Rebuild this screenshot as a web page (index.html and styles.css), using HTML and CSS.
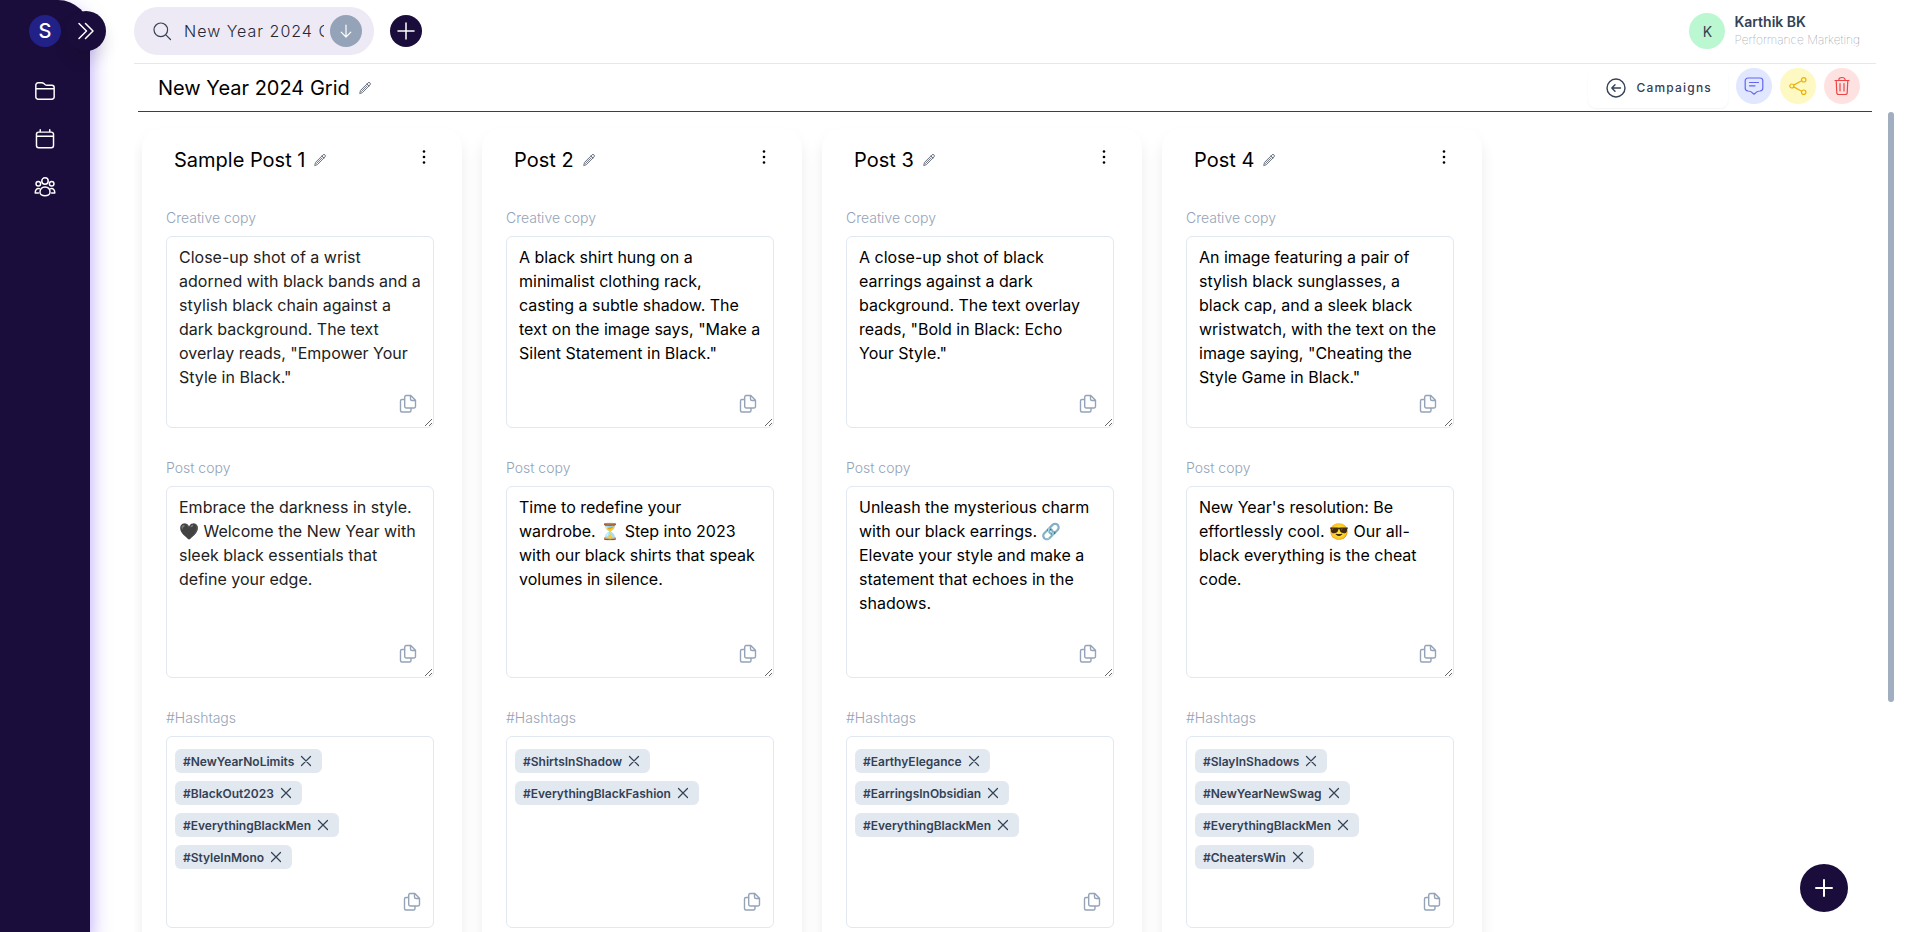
FILE: index.html
```html
<!DOCTYPE html>
<html lang="en">
<head>
<meta charset="utf-8">
<title>New Year 2024 Grid</title>
<link rel="stylesheet" href="styles.css">
</head>
<body>
<svg class="sprite" aria-hidden="true">
  <symbol id="pencil" viewBox="0 0 14 14"><path d="M1.8 12.2 2.5 9.4 10 1.9a1.3 1.3 0 0 1 2 2L4.600 11.400ZM9 3l2 2M3.500 10.400l5.500-5.500"/></symbol>
  <symbol id="copy" viewBox="0 0 20 20"><path d="M8.200 1.500h4.600l4.700 4.700v6.300a1.500 1.500 0 0 1-1.500 1.500H8.200a1.500 1.500 0 0 1-1.500-1.500V3a1.500 1.500 0 0 1 1.500-1.500ZM12.500 1.800v3.200a1.500 1.500 0 0 0 1.500 1.500h3.200M6.500 5.500H4A1.500 1.500 0 0 0 2.500 7v9.500A1.500 1.500 0 0 0 4 18h7.500a1.500 1.500 0 0 0 1.500-1.500v-2.300"/></symbol>
  <symbol id="close" viewBox="0 0 16 16"><path d="m3.500 3.500 9 9m0-9-9 9"/></symbol>
  <symbol id="dots" viewBox="0 0 16 16"><circle cx="8" cy="2.500" r="1.300"/><circle cx="8" cy="8" r="1.300"/><circle cx="8" cy="13.500" r="1.300"/></symbol>
  <symbol id="plus" viewBox="0 0 20 20"><path d="M10 2v16M2 10h16"/></symbol>
</svg>
<div class="app">
  <aside class="sidebar">
    <div class="brand">S</div>
    <button class="expand" aria-label="Expand menu"><svg viewBox="0 0 20 20"><path d="m3 2.500 7.500 7.500L3 17.500M9.500 2.500 17 10l-7.500 7.500"/></svg></button>
    <nav class="side-nav" aria-label="Main">
      <a href="#folders" aria-label="Folders"><svg viewBox="0 0 24 24"><path d="M2 18.500V5.500A2.500 2.500 0 0 1 4.500 3h4.200c.8 0 1.400.3 2 .8l1.600 1.400c.5.400 1.100.6 1.700.6h5.500A2.500 2.500 0 0 1 22 8.300v10.200a2.500 2.500 0 0 1-2.500 2.500h-15A2.500 2.500 0 0 1 2 18.500ZM2 9.500h20"/></svg></a>
      <a href="#calendar" aria-label="Calendar"><svg viewBox="0 0 24 24"><path d="M5 4.500h14a2.300 2.300 0 0 1 2.300 2.300v12.400a2.300 2.300 0 0 1-2.300 2.300H5a2.300 2.300 0 0 1-2.300-2.300V6.800A2.300 2.300 0 0 1 5 4.500ZM2.700 9h18.600M6.800 2v2.500M17.200 2v2.500"/></svg></a>
      <a href="#team" aria-label="Team"><svg viewBox="0 0 24 24"><circle cx="12" cy="5.500" r="3.500"/><circle cx="4.700" cy="8.500" r="2.500"/><circle cx="19.300" cy="8.500" r="2.500"/><path d="M12 12c3.600 0 5.500 2.300 5.500 5.800 0 2.200-2.500 3.700-5.500 3.700s-5.500-1.500-5.500-3.700C6.500 14.300 8.400 12 12 12ZM5.800 13.800c-2.900-.5-4.500 1.200-4.500 4.700h3.500M18.200 13.800c2.900-.5 4.500 1.200 4.500 4.700h-3.500"/></svg></a>
    </nav>
  </aside>
  <main class="main">
    <header class="topbar">
      <form class="search">
        <svg class="search-icon" viewBox="0 0 20 20"><circle cx="8.800" cy="8.800" r="6.800"/><path d="m13.800 13.800 4.700 4.700"/></svg>
        <input type="text" aria-label="Search" value="New Year 2024 Grid">
        <button type="button" aria-label="Next"><svg viewBox="0 0 20 20"><path d="M10 2.500v15M4 11.500l6 6 6-6"/></svg></button>
      </form>
      <button class="round add" aria-label="Add"><svg><use href="#plus"/></svg></button>
      <div class="user">
        <div class="avatar">K</div>
        <div class="who"><strong>Karthik BK</strong><span>Performance Marketing</span></div>
      </div>
    </header>
    <div class="titlebar">
      <h1>New Year 2024 Grid</h1>
      <button class="edit" aria-label="Edit title"><svg><use href="#pencil"/></svg></button>
      <div class="actions">
        <button class="back"><svg viewBox="0 0 20 20"><circle cx="10" cy="10" r="9"/><path d="M14.500 10h-8.500M9 6.800 5.800 10 9 13.200"/></svg>Campaigns</button>
        <button class="action comment" aria-label="Comments"><svg viewBox="0 0 20 20"><path d="M4 2h12a2.800 2.800 0 0 1 2.800 2.800v7.400c0 1.600-1.100 2.600-2.800 2.800-1.400.1-2.600.2-3.200.9L10 18.200l-2.800-2.300c-.6-.7-1.800-.8-3.200-.9-1.700-.2-2.800-1.200-2.800-2.800V4.800A2.800 2.800 0 0 1 4 2ZM5.500 6.500h9M5.500 9.800h5.500"/></svg></button>
        <button class="action share" aria-label="Share"><svg viewBox="0 0 20 20"><circle cx="3.800" cy="10" r="2"/><circle cx="15.700" cy="3.800" r="2.200"/><circle cx="15.700" cy="16.200" r="2.200"/><path d="m5.600 9.100 8.100-4.300M5.600 10.900l8.100 4.300"/></svg></button>
        <button class="action delete" aria-label="Delete"><svg viewBox="0 0 20 20"><path d="M3 4.500h14M6.800 4.500c0-2 .8-3 3.200-3s3.200 1 3.200 3M4.200 4.500l.6 12.200a1.800 1.800 0 0 0 1.800 1.800h6.800a1.800 1.800 0 0 0 1.800-1.800l.6-12.200M8 7.500v7.500M12 7.500v7.500"/></svg></button>
      </div>
    </div>
    <div class="board">
      <article class="card">
        <header><h2>Sample Post 1</h2><button class="edit" aria-label="Edit"><svg><use href="#pencil"/></svg></button><button class="more" aria-label="More"><svg><use href="#dots"/></svg></button></header>
        <div class="field"><label for="c1">Creative copy</label><div class="box"><textarea id="c1" class="soft">Close-up shot of a wrist adorned with black bands and a stylish black chain against a dark background. The text overlay reads, "Empower Your Style in Black."</textarea><button class="copy" aria-label="Copy"><svg><use href="#copy"/></svg></button></div></div>
        <div class="field"><label for="p1">Post copy</label><div class="box"><textarea id="p1" class="soft">Embrace the darkness in style. 🖤 Welcome the New Year with sleek black essentials that define your edge.</textarea><button class="copy" aria-label="Copy"><svg><use href="#copy"/></svg></button></div></div>
        <div class="field"><h3>#Hashtags</h3><div class="tags">
          <span class="tag">#NewYearNoLimits<button aria-label="Remove"><svg><use href="#close"/></svg></button></span>
          <span class="tag">#BlackOut2023<button aria-label="Remove"><svg><use href="#close"/></svg></button></span>
          <span class="tag">#EverythingBlackMen<button aria-label="Remove"><svg><use href="#close"/></svg></button></span>
          <span class="tag">#StyleInMono<button aria-label="Remove"><svg><use href="#close"/></svg></button></span>
          <button class="copy" aria-label="Copy"><svg><use href="#copy"/></svg></button></div></div>
      </article>
      <article class="card">
        <header><h2>Post 2</h2><button class="edit" aria-label="Edit"><svg><use href="#pencil"/></svg></button><button class="more" aria-label="More"><svg><use href="#dots"/></svg></button></header>
        <div class="field"><label for="c2">Creative copy</label><div class="box"><textarea id="c2">A black shirt hung on a minimalist clothing rack, casting a subtle shadow. The text on the image says, "Make a Silent Statement in Black."</textarea><button class="copy" aria-label="Copy"><svg><use href="#copy"/></svg></button></div></div>
        <div class="field"><label for="p2">Post copy</label><div class="box"><textarea id="p2">Time to redefine your wardrobe. ⏳ Step into 2023 with our black shirts that speak volumes in silence.</textarea><button class="copy" aria-label="Copy"><svg><use href="#copy"/></svg></button></div></div>
        <div class="field"><h3>#Hashtags</h3><div class="tags">
          <span class="tag">#ShirtsInShadow<button aria-label="Remove"><svg><use href="#close"/></svg></button></span>
          <span class="tag">#EverythingBlackFashion<button aria-label="Remove"><svg><use href="#close"/></svg></button></span>
          <button class="copy" aria-label="Copy"><svg><use href="#copy"/></svg></button></div></div>
      </article>
      <article class="card">
        <header><h2>Post 3</h2><button class="edit" aria-label="Edit"><svg><use href="#pencil"/></svg></button><button class="more" aria-label="More"><svg><use href="#dots"/></svg></button></header>
        <div class="field"><label for="c3">Creative copy</label><div class="box"><textarea id="c3">A close-up shot of black earrings against a dark background. The text overlay reads, "Bold in Black: Echo Your Style."</textarea><button class="copy" aria-label="Copy"><svg><use href="#copy"/></svg></button></div></div>
        <div class="field"><label for="p3">Post copy</label><div class="box"><textarea id="p3">Unleash the mysterious charm with our black earrings. 🔗 Elevate your style and make a statement that echoes in the shadows.</textarea><button class="copy" aria-label="Copy"><svg><use href="#copy"/></svg></button></div></div>
        <div class="field"><h3>#Hashtags</h3><div class="tags">
          <span class="tag">#EarthyElegance<button aria-label="Remove"><svg><use href="#close"/></svg></button></span>
          <span class="tag">#EarringsInObsidian<button aria-label="Remove"><svg><use href="#close"/></svg></button></span>
          <span class="tag">#EverythingBlackMen<button aria-label="Remove"><svg><use href="#close"/></svg></button></span>
          <button class="copy" aria-label="Copy"><svg><use href="#copy"/></svg></button></div></div>
      </article>
      <article class="card">
        <header><h2>Post 4</h2><button class="edit" aria-label="Edit"><svg><use href="#pencil"/></svg></button><button class="more" aria-label="More"><svg><use href="#dots"/></svg></button></header>
        <div class="field"><label for="c4">Creative copy</label><div class="box"><textarea id="c4">An image featuring a pair of stylish black sunglasses, a black cap, and a sleek black wristwatch, with the text on the image saying, "Cheating the Style Game in Black."</textarea><button class="copy" aria-label="Copy"><svg><use href="#copy"/></svg></button></div></div>
        <div class="field"><label for="p4">Post copy</label><div class="box"><textarea id="p4">New Year's resolution: Be effortlessly cool. 😎 Our all-black everything is the cheat code.</textarea><button class="copy" aria-label="Copy"><svg><use href="#copy"/></svg></button></div></div>
        <div class="field"><h3>#Hashtags</h3><div class="tags">
          <span class="tag">#SlayInShadows<button aria-label="Remove"><svg><use href="#close"/></svg></button></span>
          <span class="tag">#NewYearNewSwag<button aria-label="Remove"><svg><use href="#close"/></svg></button></span>
          <span class="tag">#EverythingBlackMen<button aria-label="Remove"><svg><use href="#close"/></svg></button></span>
          <span class="tag">#CheatersWin<button aria-label="Remove"><svg><use href="#close"/></svg></button></span>
          <button class="copy" aria-label="Copy"><svg><use href="#copy"/></svg></button></div></div>
      </article>
    </div>
  </main>
  <div class="scroll-track" aria-hidden="true"><div class="scroll-thumb"></div></div>
  <button class="round fab" aria-label="New post"><svg><use href="#plus"/></svg></button>
</div>
</body>
</html>
```
FILE: styles.css
```css
* { box-sizing: border-box; }
body { margin: 0; background: #fff; color: #000; font-family: Inter, "Noto Color Emoji", sans-serif; }
button { margin: 0; padding: 0; border: 0; background: none; color: inherit; font: inherit; cursor: pointer; display: flex; align-items: center; justify-content: center; }
h1, h2, h3 { margin: 0; font-weight: 400; }
svg { display: block; flex: none; fill: none; stroke: currentColor; stroke-width: 1.2; stroke-linecap: round; stroke-linejoin: round; }
.sprite { position: absolute; width: 0; height: 0; }

.app { display: flex; height: 100vh; overflow: hidden; }

.sidebar { position: relative; flex: none; width: 90px; padding-top: 15px; display: flex; flex-direction: column; align-items: center; background: #1b0d3b; border-top-right-radius: 32px; box-shadow: 0 10px 20px rgba(110, 70, 245, .5); color: #fff; }
.brand { width: 32px; height: 32px; border-radius: 50%; background: #222187; display: flex; align-items: center; justify-content: center; font-size: 20px; font-weight: 500; }
.expand { position: absolute; top: 11px; right: -16px; width: 40px; height: 40px; border-radius: 50%; background: #1b0d3b; box-shadow: 0 10px 15px rgba(0, 0, 0, .1); }
.expand svg { width: 20px; height: 20px; stroke-width: 1.5; }
.side-nav { display: flex; flex-direction: column; gap: 24px; margin-top: 32px; }
.side-nav a { padding: 1px; color: #fff; }
.side-nav svg { width: 22px; height: 22px; stroke-width: 1.6; }

.main { flex: 1; min-width: 0; padding: 0 12px 0 44px; display: flex; flex-direction: column; }
.topbar { display: flex; align-items: center; padding: 7px 16px 8px 0; border-bottom: 1px solid #e5e7eb; }
.search { display: flex; align-items: center; width: 240px; height: 48px; padding: 0 12px 0 18px; border-radius: 24px; background: #ede9f5; }
.search-icon { width: 20px; height: 20px; color: #374151; }
.search input { flex: 1; min-width: 0; margin: 0 6px 0 12px; padding: 0; border: 0; outline: 0; background: none; color: #1f2937; font: 300 16px/24px Inter, sans-serif; letter-spacing: 1px; }
.search button { width: 32px; height: 32px; border-radius: 50%; background: #94a3b8; color: #fff; }
.search button svg { width: 16px; height: 16px; stroke-width: 1.5; }
.round { border-radius: 50%; background: #1b0d3b; color: #fff; }
.round svg { width: 20px; height: 20px; stroke-width: 1.5; }
.add { width: 32px; height: 32px; margin-left: 16px; }
.user { display: flex; align-items: center; gap: 9px; margin-left: auto; }
.avatar { width: 36px; height: 36px; border-radius: 50%; background: #bbf7d0; display: flex; align-items: center; justify-content: center; font-size: 14px; color: #334155; }
.who { display: flex; flex-direction: column; font-size: 12px; line-height: 18px; color: #6b7280; font-weight: 100; }
.who strong { font-size: 14px; font-weight: 600; color: #334155; }

.titlebar { display: flex; align-items: center; height: 48px; margin: 0 4px; padding: 0 12px 0 20px; border-bottom: 1px solid #334155; }
h1, h2 { font-size: 20px; line-height: 28px; }
.edit { margin-left: 8px; color: #6b7280; }
.edit svg { width: 14px; height: 14px; stroke-width: 1; }
.actions { display: flex; align-items: flex-start; gap: 8px; margin-left: auto; }
.back { gap: 10px; height: 40px; padding: 0 16px 0 18px; border-radius: 8px; box-shadow: 0 1px 2px rgba(0, 0, 0, .05); color: #334155; font-size: 12px; font-weight: 500; letter-spacing: 1.2px; }
.back svg { width: 20px; height: 20px; stroke-width: 1.4; }
.action { width: 36px; height: 36px; border-radius: 50%; }
.action svg { width: 20px; height: 20px; }
.comment { background: #e0e7ff; color: #6366f1; }
.share { background: #fef9c3; color: #eab308; }
.delete { background: #fee2e2; color: #ef4444; }

.board { flex: 1; min-height: 0; overflow: hidden; display: flex; align-items: flex-start; gap: 20px; padding: 16px 8px; }
.card { flex: none; width: 320px; padding: 16px 28px 60px 24px; border-radius: 20px; box-shadow: 0 10px 15px rgba(0, 0, 0, .08); display: flex; flex-direction: column; gap: 30px; }
.card header { display: flex; align-items: center; height: 32px; padding-left: 8px; margin-bottom: 2px; }
.more { margin-left: auto; align-self: flex-start; padding: 5px 2px; }
.more svg { width: 16px; height: 16px; stroke: none; fill: #000; }
.field { display: flex; flex-direction: column; gap: 8px; }
.field label, .field h3 { font-size: 14px; line-height: 20px; font-weight: 300; color: #94a3b8; }
.box { position: relative; display: flex; }
textarea { display: block; width: 100%; height: 192px; margin: 0; padding: 8px 12px; border: 1px solid #e2e8f0; border-radius: 6px; outline: 0; background: #fff; color: #000; font: 16px/24px Inter, "Noto Color Emoji", sans-serif; resize: both; overflow: hidden; }
.soft { color: #222; }
.copy { position: absolute; right: 16px; bottom: 14px; color: #94a3b8; }
.copy svg { width: 20px; height: 20px; stroke-width: 1.4; }
.tags { position: relative; display: flex; flex-direction: column; align-items: flex-start; gap: 8px; height: 192px; padding: 12px 8px; border: 1px solid #e2e8f0; border-radius: 6px; }
.tags .copy { right: 11px; bottom: 15px; }
.tag { display: flex; align-items: center; gap: 4px; height: 24px; padding: 0 8px; border-radius: 6px; background: #e2e8f0; color: #334155; font-size: 12px; font-weight: 600; }
.tag svg { width: 16px; height: 16px; }

.scroll-track { flex: none; width: 30px; padding-top: 112px; }
.scroll-thumb { width: 6px; height: 72%; border-radius: 3px; background: #a0aec0; }
.fab { position: fixed; right: 70px; bottom: 20px; width: 48px; height: 48px; }
.fab svg { stroke-width: 2; }
```
